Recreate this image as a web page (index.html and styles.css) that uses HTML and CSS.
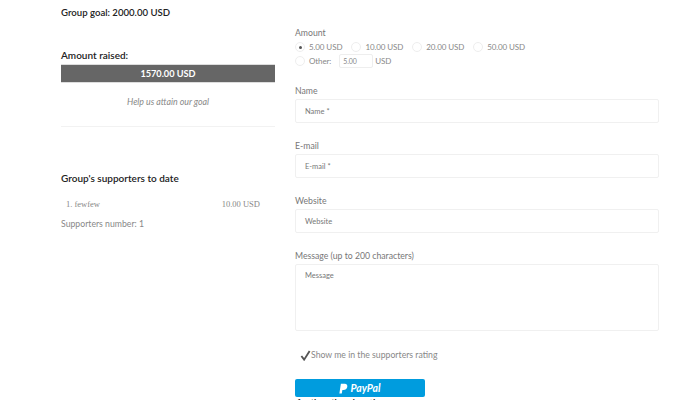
FILE: index.html
```html
<!DOCTYPE html>
<html lang="en">
<head>
<meta charset="utf-8">
<title>Group goal</title>
<link rel="stylesheet" href="styles.css">
</head>
<body>
<main class="page">
  <section class="side">
    <h3 class="goal">Group goal: 2000.00 USD</h3>
    <h3 class="raised-title">Amount raised:</h3>
    <div class="bar">1570.00 USD</div>
    <p class="help">Help us attain our goal</p>
    <hr class="rule">
    <h3 class="supporters-title">Group's supporters to date</h3>
    <div class="supporter"><span>1. fewfew</span><span>10.00 USD</span></div>
    <p class="count">Supporters number: 1</p>
  </section>
  <form class="donate">
    <div class="label">Amount</div>
    <div class="radios">
      <span class="opt"><i class="radio on"></i>5.00 USD</span>
      <span class="opt"><i class="radio"></i>10.00 USD</span>
      <span class="opt"><i class="radio"></i>20.00 USD</span>
      <span class="opt"><i class="radio"></i>50.00 USD</span>
    </div>
    <div class="other">
      <span class="opt"><i class="radio"></i>Other:</span>
      <span class="mini">5.00</span>
      <span>USD</span>
    </div>
    <div class="label field-first">Name</div>
    <div class="input">Name *</div>
    <div class="label field">E-mail</div>
    <div class="input">E-mail *</div>
    <div class="label field">Website</div>
    <div class="input">Website</div>
    <div class="label field">Message (up to 200 characters)</div>
    <div class="input area">Message</div>
    <div class="check">
      <svg class="tick" viewBox="0 0 12 12" width="11" height="11"><path d="M1.5 6.5 L4.5 10.5 L10.5 1" fill="none" stroke="#555" stroke-width="2"/></svg>
      <span>Show me in the supporters rating</span>
    </div>
    <div class="paypal">
      <svg class="pp" viewBox="0 0 12 14" width="9" height="11"><path d="M2.5 0.5 H7.5 C10.5 0.5 11.5 2.5 11 5 C10.5 7.5 8.5 9 6 9 H4.5 L3.7 13.5 H0.5 Z" fill="#fff"/></svg>
      <span class="pp-text">PayPal</span>
    </div>
    <p class="below">for the other donation</p>
  </form>
</main>
</body>
</html>
```
FILE: styles.css
```css
html, body {
  margin: 0;
  padding: 0;
  background: #fff;
  height: 400px;
  overflow: hidden;
}
body {
  font-family: Lato, "Noto Sans", sans-serif;
  font-size: 8.7px;
  color: #888;
}
.page {
  display: grid;
  grid-template-columns: 214px 364px;
  column-gap: 20px;
  padding-left: 61px;
}
h3 {
  margin: 0;
  font-size: 10px;
  line-height: 14px;
  font-weight: 600;
  color: #222;
}
.goal { font-size: 9.6px; }
.side { padding-top: 6px; }
.raised-title { margin-top: 28px; }
.bar {
  margin-top: 2px;
  height: 17px;
  line-height: 17px;
  background: #666;
  border: 1px solid #ddd;
  border-width: 1px 0;
  text-align: center;
  color: #fff;
  font-weight: 700;
  font-size: 9.2px;
}
.help {
  margin: 12px 0 0;
  text-align: center;
  font-style: italic;
  line-height: 14px;
  font-size: 8.8px;
}
.rule {
  margin: 17px 0 0;
  border: 0;
  border-top: 1px solid #f2f2f2;
}
.supporters-title { margin-top: 44px; }
.supporter {
  display: flex;
  justify-content: space-between;
  margin-top: 12px;
  padding: 0 15px 0 5px;
  font-family: "Liberation Serif", serif;
  font-size: 8.5px;
  line-height: 14px;
}
.count { margin: 6px 0 0; line-height: 14px; }
.donate { padding-top: 26px; }
.label { line-height: 14px; color: #777; }
.field-first { margin-top: 16px; }
.field { margin-top: 16px; }
.radios, .other {
  display: flex;
  align-items: center;
  line-height: 14px;
  font-size: 8px;
  letter-spacing: -0.1px;
}
.radios { gap: 9px; }
.opt { display: inline-flex; align-items: center; gap: 4px; }
.radio {
  width: 8px;
  height: 8px;
  border: 1px solid #eee;
  border-radius: 50%;
  background: #fff;
  display: inline-block;
  position: relative;
}
.radio.on::after {
  content: "";
  position: absolute;
  left: 2.5px;
  top: 2.5px;
  width: 3px;
  height: 3px;
  border-radius: 50%;
  background: #555;
}
.mini {
  width: 29px;
  height: 12px;
  margin: 0 2px 0 8px;
  border: 1px solid #eee;
  border-radius: 2px;
  padding-left: 3px;
  font-size: 7px;
  line-height: 12px;
}
.input {
  height: 22px;
  line-height: 23px;
  margin-top: 1px;
  border: 1px solid #f0f0f0;
  border-radius: 2px;
  padding-left: 9px;
  font-size: 7.5px;
  color: #777;
}
.area { height: 65px; line-height: 22px; }
.check {
  display: flex;
  align-items: center;
  margin-top: 17px;
  padding-left: 5px;
  line-height: 14px;
}
.paypal {
  display: flex;
  align-items: center;
  justify-content: center;
  gap: 2px;
  width: 130px;
  height: 18px;
  margin-top: 17px;
  background: #009cde;
  border-radius: 2px;
}
.pp-text {
  color: #fff;
  font-weight: 700;
  font-style: italic;
  font-size: 10.5px;
}
.below {
  margin: 1px 0 0;
  padding-left: 2px;
  font-size: 9px;
  line-height: 9px;
  color: #222;
  font-weight: 700;
}
```
